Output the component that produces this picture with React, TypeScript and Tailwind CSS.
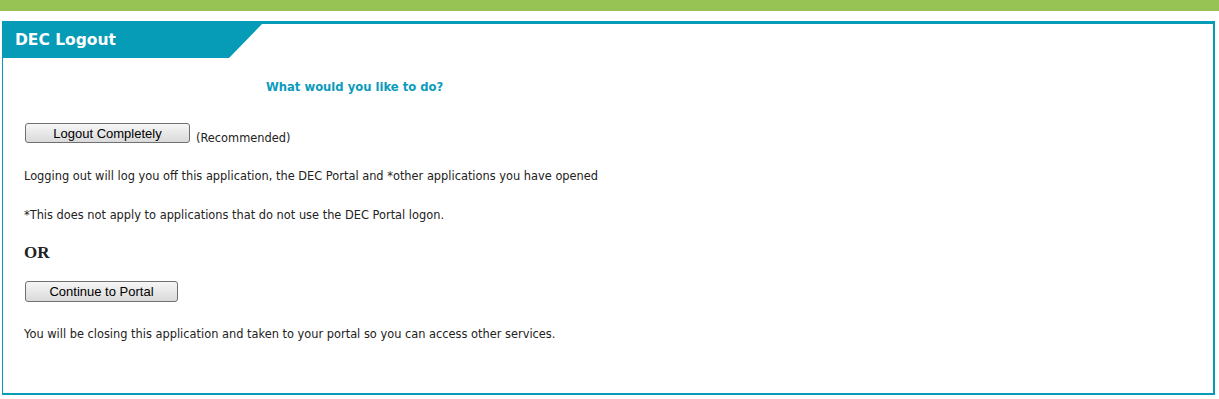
export default function App() {
  return (
    <div className="w-[1219px] h-[399px] bg-white overflow-hidden">
      <div className="h-[11px] bg-[#97c355]" />
      <div className="mt-[10px] ml-[2px] w-[1213px] h-[374px] border-t-[3px] border-l border-r-2 border-b-2 border-[#069bb6]">
        <div className="w-[259px] h-[34px] bg-[#069bb6] [clip-path:polygon(0_0,259px_0,226px_100%,0_100%)] flex items-center pl-[12px]">
          <span className="text-white font-bold text-[15.5px] font-['DejaVu_Sans',sans-serif] leading-none">
            DEC Logout
          </span>
        </div>
        <div className="pl-[21px] font-['DejaVu_Sans',sans-serif] text-[11.4px] text-[#222]">
          <p className="mt-[21px] pl-[242px] text-[#0a9bbd] font-bold text-[11.6px] leading-[16px]">
            What would you like to do?
          </p>
          <div className="mt-[28px] flex items-start">
            <button className="ml-[1px] w-[165px] h-[20px] rounded-[3px] border border-[#707070] bg-gradient-to-b from-[#f6f6f6] to-[#dadada] text-black text-[13px] font-['Liberation_Sans',sans-serif] leading-none">
              Logout Completely
            </button>
            <span className="ml-[6px] mt-[7px] leading-[16px]">(Recommended)</span>
          </div>
          <p className="mt-[22px] leading-[16px]">
            Logging out will log you off this application, the DEC Portal and *other applications you have opened
          </p>
          <p className="mt-[23px] leading-[16px]">
            *This does not apply to applications that do not use the DEC Portal logon.
          </p>
          <p className="mt-[20px] font-['Liberation_Serif',serif] font-bold text-[17px] leading-[20px] text-[#222]">
            OR
          </p>
          <button className="block mt-[18px] ml-[1px] w-[153px] h-[21px] rounded-[3px] border border-[#707070] bg-gradient-to-b from-[#f6f6f6] to-[#dadada] text-black text-[13px] font-['Liberation_Sans',sans-serif] leading-none">
            Continue to Portal
          </button>
          <p className="mt-[24px] leading-[16px]">
            You will be closing this application and taken to your portal so you can access other services.
          </p>
        </div>
      </div>
    </div>
  );
}
